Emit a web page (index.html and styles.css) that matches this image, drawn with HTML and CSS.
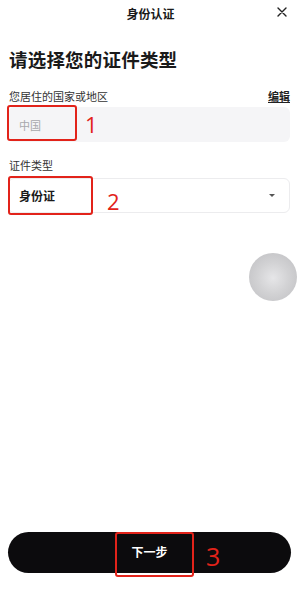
FILE: index.html
```html
<!DOCTYPE html>
<html lang="zh-CN">
<head>
    <meta charset="UTF-8">
    <meta name="viewport" content="width=device-width, initial-scale=1.0">
    <link rel="stylesheet" href="styles.css">
    <title>身份认证</title>
</head>
<body>
    <div class="pagina">
        <div class="cabecera">
            <span class="titulo">身份认证</span>
            <span class="cerrar">
                <svg width="10" height="10" viewBox="0 0 10 10"><path d="M1 1L9 9M9 1L1 9" stroke="#222" stroke-width="1.4" stroke-linecap="round"/></svg>
            </span>
        </div>

        <h1 class="encabezado">请选择您的证件类型</h1>

        <div class="fila-label">
            <span class="label">您居住的国家或地区</span>
            <span class="editar">编辑</span>
        </div>
        <div class="campo campo-gris">
            <span class="valor-gris">中国</span>
            <span class="marca marca1"></span>
            <span class="numero num1">1</span>
        </div>

        <div class="fila-label segunda">
            <span class="label">证件类型</span>
        </div>
        <div class="campo campo-select">
            <span class="valor">身份证</span>
            <span class="flecha"></span>
            <span class="marca marca2"></span>
            <span class="numero num2">2</span>
        </div>

        <div class="burbuja"></div>

        <div class="espacio"></div>

        <button class="boton">
            下一步
            <span class="marca marca3"></span>
            <span class="numero num3">3</span>
        </button>
    </div>
</body>
</html>
```

FILE: styles.css
```css
body {
    margin: 0;
    background-color: #ffffff;
    font-family: "Noto Sans CJK SC", "Noto Sans", sans-serif;
    color: #1a1a1a;
}

.pagina {
    width: 299px;
    height: 607px;
    display: flex;
    flex-direction: column;
    position: relative;
}

.cabecera {
    height: 26px;
    display: flex;
    align-items: center;
    justify-content: center;
    position: relative;
}

.titulo {
    font-size: 12px;
    font-weight: bold;
    margin-left: 2px;
}

.cerrar {
    position: absolute;
    right: 12px;
    top: 7px;
    display: flex;
}

.encabezado {
    margin: 21px 0 0 9px;
    font-size: 18.5px;
    font-weight: bold;
    line-height: 24px;
    letter-spacing: 0.2px;
}

.fila-label {
    margin: 18px 9px 0 9px;
    display: flex;
    justify-content: space-between;
    align-items: center;
    height: 14px;
}

.fila-label.segunda {
    margin-top: 16px;
}

.label {
    font-size: 11px;
    color: #333;
}

.editar {
    font-size: 11px;
    font-weight: bold;
    text-decoration: underline;
    color: #222;
}

.campo {
    margin: 3px 9px 0 8px;
    height: 35px;
    border-radius: 6px;
    display: flex;
    align-items: center;
    position: relative;
}

.campo-gris {
    background-color: #f5f5f7;
    margin-top: 4px;
}

.campo-select {
    background-color: #ffffff;
    border: 1px solid #ececee;
    box-sizing: border-box;
    margin-top: 6px;
}

.valor-gris {
    margin-left: 11px;
    font-size: 11px;
    color: #a8a8ac;
}

.valor {
    margin-left: 10px;
    font-size: 12px;
    font-weight: bold;
}

.flecha {
    margin-left: auto;
    margin-right: 14px;
    width: 0;
    height: 0;
    border-left: 3px solid transparent;
    border-right: 3px solid transparent;
    border-top: 3px solid #555;
}

.marca {
    position: absolute;
    border: 2px solid #e2231a;
    border-radius: 3px;
    box-sizing: border-box;
}

.marca1 {
    left: -1px;
    top: -2px;
    width: 70px;
    height: 36px;
}

.marca2 {
    left: -1px;
    top: -3px;
    width: 85px;
    height: 39px;
}

.marca3 {
    left: 107px;
    top: 0;
    width: 79px;
    height: 45px;
}

.numero {
    position: absolute;
    color: #e2231a;
    font-family: "Open Sans", "Lato", sans-serif;
    font-weight: 400;
    font-size: 22px;
    line-height: 22px;
}

.num1 {
    left: 77px;
    top: 6px;
}

.num2 {
    left: 98px;
    top: 11px;
}

.num3 {
    left: 198px;
    top: 12px;
    font-size: 25px;
    line-height: 25px;
}

.burbuja {
    align-self: flex-end;
    margin: 40px 2px 0 0;
    width: 48px;
    height: 48px;
    border-radius: 50%;
    background: radial-gradient(circle at 50% 52%, #e6e6e8 0%, #d2d2d4 45%, #bdbdc0 100%);
}

.espacio {
    flex: 1;
}

.boton {
    margin: 0 8px 34px 8px;
    height: 41px;
    border: none;
    border-radius: 21px;
    background-color: #0c0b0d;
    color: #ffffff;
    font-family: "Noto Sans CJK SC", sans-serif;
    font-size: 12px;
    font-weight: bold;
    position: relative;
    padding: 0 0 2px 0;
}
```
